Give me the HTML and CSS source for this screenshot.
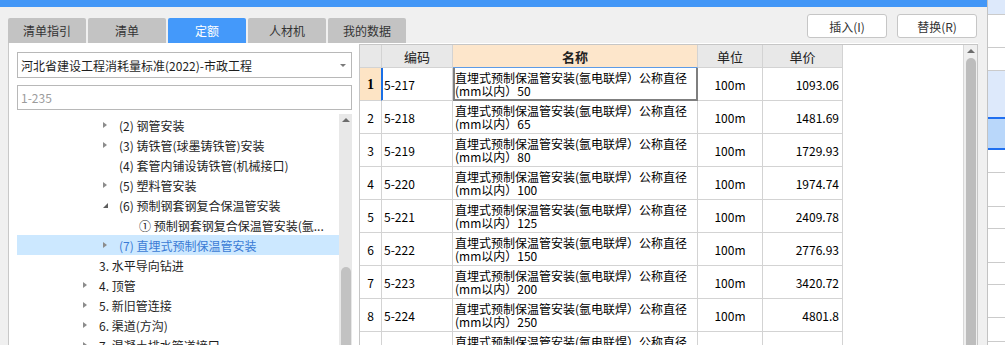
FILE: index.html
```html
<!DOCTYPE html>
<html lang="zh-CN">
<head>
  <meta charset="UTF-8" />
  <title>定额</title>
  <link rel="stylesheet" href="styles.css">
</head>
<body>
<div class="app">
  <div class="main">
    <div class="topbar"></div>

    <div class="toolbar">
      <div class="tabs">
        <div class="tab">清单指引</div>
        <div class="tab">清单</div>
        <div class="tab active">定额</div>
        <div class="tab">人材机</div>
        <div class="tab">我的数据</div>
      </div>
      <div class="actions">
        <button class="btn">插入(I)</button>
        <button class="btn">替换(R)</button>
      </div>
    </div>

    <div class="content">
      <!-- left: library + chapter tree -->
      <div class="left">
        <div class="select">河北省建设工程消耗量标准(2022)-市政工程</div>
        <input class="search" type="text" placeholder="1-235">
        <div class="tree">
          <ul class="nodes">
            <li class="node l3"><span class="caret closed"></span><span>(2) 钢管安装</span></li>
            <li class="node l3"><span class="caret closed"></span><span>(3) 铸铁管(球墨铸铁管)安装</span></li>
            <li class="node l3"><span class="caret"></span><span>(4) 套管内铺设铸铁管(机械接口)</span></li>
            <li class="node l3"><span class="caret closed"></span><span>(5) 塑料管安装</span></li>
            <li class="node l3"><span class="caret open"></span><span>(6) 预制钢套钢复合保温管安装</span></li>
            <li class="node l4"><span class="caret"></span><span>① 预制钢套钢复合保温管安装(氩...</span></li>
            <li class="node l3 sel"><span class="caret closed"></span><span>(7) 直埋式预制保温管安装</span></li>
            <li class="node l2"><span class="caret"></span><span>3. 水平导向钻进</span></li>
            <li class="node l2"><span class="caret closed"></span><span>4. 顶管</span></li>
            <li class="node l2"><span class="caret closed"></span><span>5. 新旧管连接</span></li>
            <li class="node l2"><span class="caret closed"></span><span>6. 渠道(方沟)</span></li>
            <li class="node l2"><span class="caret closed"></span><span>7. 混凝土排水管道接口</span></li>
          </ul>
          <div class="vscroll">
            <span class="up"></span>
            <span class="thumb tree-thumb"></span>
          </div>
        </div>
      </div>

      <!-- right: quota grid -->
      <div class="grid-pane">
        <div class="grid">
          <div class="cell hd"></div>
          <div class="cell hd">编码</div>
          <div class="cell hd hd-name">名称</div>
          <div class="cell hd">单位</div>
          <div class="cell hd">单价</div>

          <div class="cell rh cur">1</div>
          <div class="cell code cur-code">5-217</div>
          <div class="cell name focus"><span>直埋式预制保温管安装(氩电联焊）公称直径<br>(mm以内）50</span></div>
          <div class="cell unit">100m</div>
          <div class="cell price">1093.06</div>

          <div class="cell rh">2</div>
          <div class="cell code">5-218</div>
          <div class="cell name"><span>直埋式预制保温管安装(氩电联焊）公称直径<br>(mm以内）65</span></div>
          <div class="cell unit">100m</div>
          <div class="cell price">1481.69</div>

          <div class="cell rh">3</div>
          <div class="cell code">5-219</div>
          <div class="cell name"><span>直埋式预制保温管安装(氩电联焊）公称直径<br>(mm以内）80</span></div>
          <div class="cell unit">100m</div>
          <div class="cell price">1729.93</div>

          <div class="cell rh">4</div>
          <div class="cell code">5-220</div>
          <div class="cell name"><span>直埋式预制保温管安装(氩电联焊）公称直径<br>(mm以内）100</span></div>
          <div class="cell unit">100m</div>
          <div class="cell price">1974.74</div>

          <div class="cell rh">5</div>
          <div class="cell code">5-221</div>
          <div class="cell name"><span>直埋式预制保温管安装(氩电联焊）公称直径<br>(mm以内）125</span></div>
          <div class="cell unit">100m</div>
          <div class="cell price">2409.78</div>

          <div class="cell rh">6</div>
          <div class="cell code">5-222</div>
          <div class="cell name"><span>直埋式预制保温管安装(氩电联焊）公称直径<br>(mm以内）150</span></div>
          <div class="cell unit">100m</div>
          <div class="cell price">2776.93</div>

          <div class="cell rh">7</div>
          <div class="cell code">5-223</div>
          <div class="cell name"><span>直埋式预制保温管安装(氩电联焊）公称直径<br>(mm以内）200</span></div>
          <div class="cell unit">100m</div>
          <div class="cell price">3420.72</div>

          <div class="cell rh">8</div>
          <div class="cell code">5-224</div>
          <div class="cell name"><span>直埋式预制保温管安装(氩电联焊）公称直径<br>(mm以内）250</span></div>
          <div class="cell unit">100m</div>
          <div class="cell price">4801.8</div>

          <div class="cell rh">9</div>
          <div class="cell code">5-225</div>
          <div class="cell name"><span>直埋式预制保温管安装(氩电联焊）公称直径<br>(mm以内）300</span></div>
          <div class="cell unit">100m</div>
          <div class="cell price">5897.83</div>
        </div>
        <div class="vscroll grid-scroll">
          <span class="up"></span>
          <span class="thumb grid-thumb"></span>
        </div>
      </div>
    </div>
  </div>

  <!-- neighbouring panel, cut off at the window edge -->
  <div class="strip">
    <div class="band b1"></div>
    <div class="band b2"></div>
    <div class="band b3"></div>
    <div class="band b4"></div>
    <div class="band b5"></div>
    <div class="band" style="height:23px"></div>
    <div class="band" style="height:34px"></div>
    <div class="band" style="height:22px"></div>
    <div class="band" style="height:34px"></div>
    <div class="band" style="height:22px"></div>
    <div class="band" style="height:33px"></div>
    <div class="band" style="height:24px"></div>
  </div>
</div>
</body>
</html>
```

FILE: styles.css
```css
body {
  margin: 0;
  background: #f0f0f0;
  font-family: "Noto Sans CJK SC", "Noto Sans", sans-serif;
  font-size: 12px;
  color: #222;
  overflow: hidden;
}
.app {
  display: flex;
  width: 1005px;
  height: 345px;
  overflow: hidden;
}
.main {
  width: 987px;
  display: flex;
  flex-direction: column;
}
.topbar {
  height: 7px;
  background: #4397f7;
}
.toolbar {
  height: 36px;
  display: flex;
  padding: 0 10px 0 8px;
}
.tabs {
  display: flex;
  gap: 2px;
  align-self: flex-end;
}
.tab {
  width: 78px;
  height: 25px;
  background: #c3c3c3;
  border-radius: 2px 2px 0 0;
  display: flex;
  align-items: center;
  justify-content: center;
  color: #333;
}
.tab.active {
  background: #4499fa;
  color: #fff;
}
.actions {
  margin-left: auto;
  margin-top: 7px;
  align-self: flex-start;
  display: flex;
  gap: 10px;
}
.btn {
  width: 80px;
  height: 24px;
  padding: 0;
  background: #fff;
  border: 1px solid #c6c6c6;
  border-radius: 3px;
  font: inherit;
  color: #333;
}

.content {
  flex: 1;
  min-height: 0;
  display: flex;
  margin: 0 9px 0 8px;
  background: #fff;
  border-left: 1px solid #c8c8c8;
}
.left {
  width: 350px;
  padding: 9px 7px 0 8px;
  box-sizing: border-box;
  display: flex;
  flex-direction: column;
}
.select {
  height: 26px;
  box-sizing: border-box;
  border: 1px solid #b8b8b8;
  padding-left: 3px;
  display: flex;
  align-items: center;
  position: relative;
  color: #1e1e1e;
}
.select::after {
  content: "";
  position: absolute;
  right: 5px;
  top: 11px;
  border-top: 3px solid #7a7a7a;
  border-left: 3px solid transparent;
  border-right: 3px solid transparent;
}
.search {
  height: 25px;
  margin-top: 7px;
  box-sizing: border-box;
  width: 100%;
  border: 1px solid #b8b8b8;
  padding: 0 0 0 3px;
  font: inherit;
  outline: none;
}
.search::placeholder {
  color: #9c9c9c;
}
.tree {
  flex: 1;
  min-height: 0;
  margin-top: 4px;
  display: flex;
  overflow: hidden;
}
.nodes {
  flex: 1;
  list-style: none;
  margin: 0;
  padding: 1px 0 0;
}
.node {
  height: 20px;
  display: flex;
  align-items: center;
  white-space: nowrap;
  color: #1e1e1e;
}
.node.l2 { padding-left: 60px; }
.node.l3 { padding-left: 80px; }
.node.l4 { padding-left: 100px; }
.node.sel {
  background: #cce8ff;
  color: #3a7bd5;
}
.caret {
  width: 16px;
  margin-right: 6px;
  display: flex;
  justify-content: center;
}
.caret.closed::before {
  content: "";
  border-left: 4px solid #8c8c8c;
  border-top: 3px solid transparent;
  border-bottom: 3px solid transparent;
}
.caret.open::before {
  content: "";
  border-bottom: 5px solid #5e5e5e;
  border-left: 5px solid transparent;
}

.vscroll {
  width: 13px;
  background: #e8e8e8;
  display: flex;
  flex-direction: column;
  align-items: center;
}
.up {
  margin-top: 4px;
  border-bottom: 4px solid #6c6c6c;
  border-left: 4px solid transparent;
  border-right: 4px solid transparent;
}
.thumb {
  flex: 1;
  width: 10px;
  background: #c2c2c2;
  border-radius: 5px 5px 0 0;
}
.tree-thumb {
  margin-top: 145px;
}

.grid-pane {
  width: 619px;
  box-sizing: border-box;
  margin-top: 1px;
  border: 1px solid #c6c6c6;
  border-bottom: 0;
  display: flex;
  justify-content: space-between;
  overflow: hidden;
}
.grid {
  display: grid;
  grid-template-columns: 22px 71px 245px 65px 80px;
  grid-template-rows: 23px;
  grid-auto-rows: 33px;
  align-content: start;
}
.cell {
  border-right: 1px solid #d3d3d3;
  border-bottom: 1px solid #d3d3d3;
  display: flex;
  align-items: center;
  line-height: 13px;
  color: #000;
  white-space: nowrap;
  overflow: hidden;
}
.hd {
  background: #e8e8e8;
  justify-content: center;
  font-size: 13px;
  color: #222;
}
.hd-name {
  background: #fde6cb;
  font-weight: bold;
  border-bottom-color: #5d9be6;
}
.rh {
  justify-content: center;
}
.rh.cur {
  background: #fde4c5;
  font-family: "Liberation Serif", serif;
  font-weight: bold;
  font-size: 14px;
  border-right-color: #1a6fe6;
}
.code {
  padding-left: 2px;
}
.cur-code {
  box-shadow: inset 1px 0 #1a6fe6;
}
.name {
  padding-left: 2px;
}
.focus {
  border-right-color: #7f7f7f;
  border-bottom-color: #7f7f7f;
  box-shadow: inset 2px 0 #7f7f7f, inset -1px 0 #7f7f7f, inset 0 -1px #7f7f7f;
}
.unit {
  justify-content: center;
}
.price {
  justify-content: flex-end;
  padding-right: 3px;
}
.grid-scroll {
  width: 14px;
  box-sizing: border-box;
  border-left: 1px solid #d8d8d8;
  background: #efefef;
}
.grid-thumb {
  margin-top: 5px;
  background: #bdbdbd;
}

.strip {
  width: 17px;
  border-left: 1px solid #c3c3c3;
  background: #fff;
}
.band {
  box-sizing: border-box;
  border-bottom: 1px solid #cbcbcb;
}
.b1 { height: 15px; background: #dde9fb; }
.b2 { height: 33px; }
.b3 { height: 23px; }
.b4 { height: 46px; background: #dde9fb; border-bottom: 0; }
.b5 {
  height: 33px;
  background: #b9d7fa;
  border-top: 2px solid #1f6ff0;
  border-bottom: 2px solid #1f6ff0;
}
```
